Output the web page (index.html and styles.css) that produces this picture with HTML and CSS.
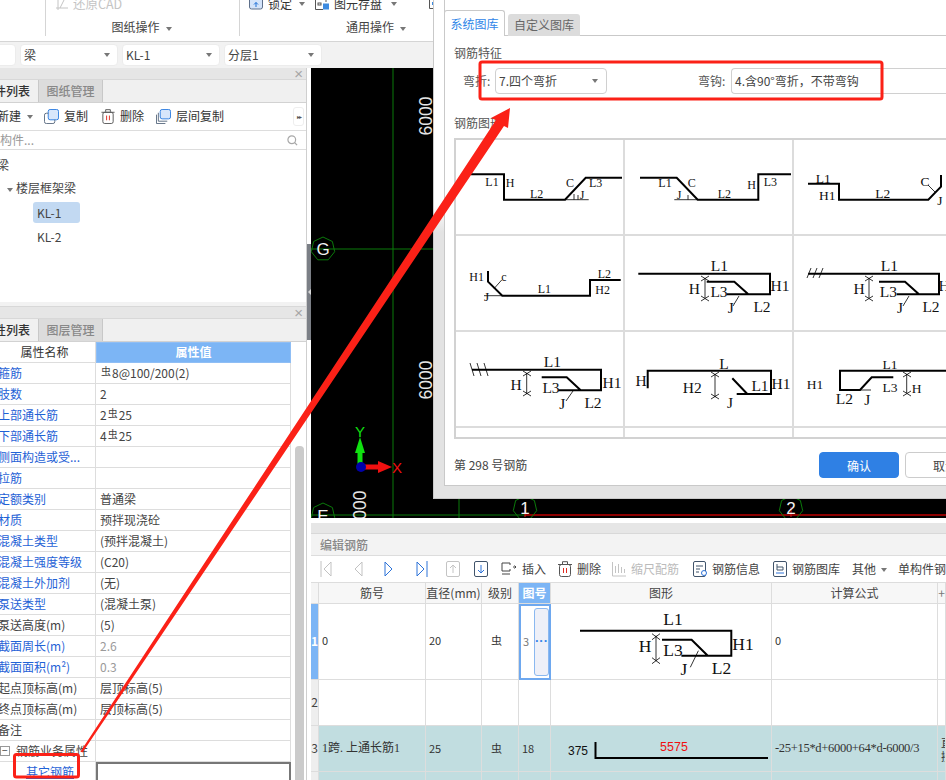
FILE: index.html
```html
<!DOCTYPE html>
<html lang="zh">
<head>
<meta charset="utf-8">
<title>编辑钢筋</title>
<link rel="stylesheet" href="styles.css">
</head>
<body>
<div class="app">
  <header class="ribbon">
    <div class="rgroup g0"></div>
    <div class="rgroup g1">
      <div class="rtool dim"><svg class="ri" viewBox="0 0 14 10"><path d="M1 8H13M3 0V10M9 0L5 8" fill="none" stroke="#c4c4c4"/></svg><span>还原CAD</span></div>
      <div class="rlabel">图纸操作<i class="caret"></i></div>
    </div>
    <div class="rgroup g2">
      <div class="rtool">
        <svg class="ri" viewBox="0 0 14 10"><rect x="0.5" y="-4" width="13" height="13" rx="2" fill="#d4e4fa" stroke="#5d6f8a"/><path d="M7 2.5V7M5 4.5L7 2.5L9 4.5" fill="none" stroke="#1d6fd6"/></svg>
        <span class="w-lock">锁定</span><i class="caret"></i>
        <svg class="ri ri2" viewBox="0 0 14 10"><path d="M.5 0V9.5H8M11 0V2" fill="none" stroke="#555"/><rect x="3" y="3" width="3" height="2" fill="none" stroke="#555"/><rect x="8" y="3.5" width="6" height="6" fill="#3d8be0"/></svg>
        <span class="w-save">图元存盘</span><i class="caret"></i>
        <svg class="ri ri3" viewBox="0 0 14 10"><path d="M.5 0V8.500H10V0" fill="none" stroke="#555"/><rect x="3" y="2" width="4" height="3" fill="#3d8be0"/></svg>
      </div>
      <div class="rlabel">通用操作<i class="caret"></i></div>
    </div>
  </header>

  <nav class="combos">
    <div class="combo c0"><i class="caret"></i></div>
    <div class="combo"><span>梁</span><i class="caret"></i></div>
    <div class="combo"><span>KL-1</span><i class="caret"></i></div>
    <div class="combo"><span>分层1</span><i class="caret"></i></div>
  </nav>

  <div class="work">
    <aside class="side">
      <section class="panel list">
        <div class="ptitle"><span class="close">×</span></div>
        <div class="tabs">
          <div class="tab on">构件列表</div>
          <div class="tab">图纸管理</div>
        </div>
        <div class="stool">
          <span class="clipl new">新建</span><i class="caret c-new"></i>
          <svg class="si s-copy" viewBox="0 0 16 16"><rect x="4.5" y="0.5" width="11" height="11" rx="2" fill="#d7e6fb" stroke="#2d7de0"/><path d="M4.5 4.5H2.5a2 2 0 0 0-2 2v7a2 2 0 0 0 2 2h7a2 2 0 0 0 2-2v-2" fill="none" stroke="#5a6b80"/></svg>
          <span>复制</span>
          <svg class="si s-del" viewBox="0 0 14 16"><path d="M0 3.5H14M4.5 3V.7H9.5V3" fill="none" stroke="#555"/><rect x="1.5" y="3.5" width="11" height="12" rx="2" fill="none" stroke="#555"/><path d="M5.5 7V12M8.5 7V12" stroke="#e02b20"/></svg>
          <span>删除</span>
          <svg class="si s-lay" viewBox="0 0 16 16"><rect x="4.5" y="0.5" width="11" height="10" rx="2" fill="#d7e6fb" stroke="#2d7de0"/><path d="M2.5 4V13H12M.5 6V15.5H10" fill="none" stroke="#5a6b80"/></svg>
          <span>层间复制</span>
          <span class="more">▸▸</span>
        </div>
        <div class="search"><span class="clipl ph">搜索构件...</span><svg class="sic" viewBox="0 0 12 12"><circle cx="5.2" cy="5.2" r="4.2" fill="none" stroke="#a8a8a8" stroke-width="1.3"/><path d="M8.2 8.2L11 11" stroke="#a8a8a8" stroke-width="1.3"/></svg></div>
        <div class="tree">
          <div class="n0"><span class="clipl l0">梁</span></div>
          <div class="n1"><i class="caret c-tree"></i>楼层框架梁</div>
          <div class="n2 sel">KL-1</div>
          <div class="n2">KL-2</div>
        </div>
      </section>

      <section class="panel props">
        <div class="ptitle"><span class="close">×</span></div>
        <div class="tabs">
          <div class="tab on">属性列表</div>
          <div class="tab">图层管理</div>
        </div>
        <div class="pbody">
          <div class="ptable">
            <div class="ph-n">属性名称</div><div class="ph-v">属性值</div>
            <div class="pn lk">箍筋</div><div class="pv"><span class="gr">虫</span>8@100/200(2)</div>
            <div class="pn lk">肢数</div><div class="pv">2</div>
            <div class="pn lk">上部通长筋</div><div class="pv">2<span class="gr">虫</span>25</div>
            <div class="pn lk">下部通长筋</div><div class="pv">4<span class="gr">虫</span>25</div>
            <div class="pn lk">侧面构造或受...</div><div class="pv"></div>
            <div class="pn lk">拉筋</div><div class="pv"></div>
            <div class="pn lk">定额类别</div><div class="pv">普通梁</div>
            <div class="pn lk">材质</div><div class="pv">预拌现浇砼</div>
            <div class="pn lk">混凝土类型</div><div class="pv">(预拌混凝土)</div>
            <div class="pn lk">混凝土强度等级</div><div class="pv">(C20)</div>
            <div class="pn lk">混凝土外加剂</div><div class="pv">(无)</div>
            <div class="pn lk">泵送类型</div><div class="pv">(混凝土泵)</div>
            <div class="pn">泵送高度(m)</div><div class="pv">(5)</div>
            <div class="pn lk">截面周长(m)</div><div class="pv mut">2.6</div>
            <div class="pn lk">截面面积(m²)</div><div class="pv mut">0.3</div>
            <div class="pn">起点顶标高(m)</div><div class="pv">层顶标高(5)</div>
            <div class="pn">终点顶标高(m)</div><div class="pv">层顶标高(5)</div>
            <div class="pn">备注</div><div class="pv"></div>
            <div class="pn grp"><span class="minus">−</span>钢筋业务属性</div><div class="pv"></div>
            <div class="pn sub"><span class="lk und">其它钢筋</span></div><div class="pv edit"></div>
          </div>
          <div class="track"><div class="thumb"></div></div>
        </div>
      </section>
    </aside>

    <div class="split"><div class="handle"><i class="nub"></i></div></div>

    <main class="right">
      <div class="canvas">
        <svg class="cad" viewBox="311 68 635 450">
          <defs><polygon id="hept" points="0,-12 9.4,-7.5 11.7,2.7 5.2,10.8 -5.2,10.8 -11.7,2.7 -9.4,-7.5" fill="none" stroke="#0b7a0b"/></defs>
          <path d="M393 68V518M311 249H946M459 499V518M311 515H525" stroke="#0b7a0b" fill="none"/>
          <path d="M525 515H946" stroke="#8c0000" stroke-width="2"/>
          <path d="M525 507V517M791 507V517" stroke="#d81818"/>
          <use href="#hept" x="323" y="249"/><use href="#hept" x="323" y="515"/><use href="#hept" x="525" y="508"/><use href="#hept" x="791" y="508"/>
          <text class="bub" x="323" y="255">G</text><text class="bub" x="323" y="522">E</text><text class="bub" x="525" y="514">1</text><text class="bub" x="791" y="514">2</text>
          <text class="dim6" transform="translate(432 116) rotate(-90)">6000</text>
          <text class="dim6" transform="translate(432 380) rotate(-90)">6000</text>
          <text class="dim6" transform="translate(366 510) rotate(-90)">6000</text>
          <path d="M360 468V448" stroke="#10e010" stroke-width="5"/><path d="M360 437L365 453H355Z" fill="#10e010"/>
          <path d="M360 467H382" stroke="#f01010" stroke-width="5"/><path d="M392 467L378 461V473Z" fill="#f01010"/>
          <circle cx="361" cy="467" r="5" fill="#0000a8"/>
          <text class="ax g" x="360" y="437">Y</text><text class="ax r" x="397" y="473">X</text>
        </svg>
      </div>
      <div class="gap"></div>
      <section class="edit-panel">
        <div class="ptitle wide"></div>
        <div class="ehead">编辑钢筋</div>
        <div class="etool">
          <svg class="nv" viewBox="0 0 12 18"><path d="M1 1V17M11 2L4 9L11 16Z" fill="none" stroke="#c2c2c2"/></svg>
          <svg class="nv m1" viewBox="0 0 12 18"><path d="M10 2L3 9L10 16Z" fill="none" stroke="#c2c2c2"/></svg>
          <svg class="nv m2" viewBox="0 0 12 18"><path d="M2 2L9 9L2 16Z" fill="none" stroke="#2c72d8"/></svg>
          <svg class="nv m3" viewBox="0 0 12 18"><path d="M11 1V17M1 2L8 9L1 16Z" fill="none" stroke="#2c72d8"/></svg>
          <svg class="bx m4" viewBox="0 0 14 16"><rect x=".5" y=".5" width="13" height="15" rx="1.5" fill="none" stroke="#c4c4c4"/><path d="M7 12V4M4 7L7 4L10 7" fill="none" stroke="#c4c4c4"/></svg>
          <svg class="bx m5" viewBox="0 0 14 16"><rect x=".5" y=".5" width="13" height="15" rx="1.5" fill="none" stroke="#41546b"/><path d="M7 4V12M4 9L7 12L10 9" fill="none" stroke="#2c72d8"/></svg>
          <svg class="ti m6" viewBox="0 0 16 14"><path d="M9 3V1H1V9H9V7M12 5H15M13.500 3.500L15 5L13.500 6.500" fill="none" stroke="#444"/><path d="M1 12H9" stroke="#444"/></svg>
          <span class="lbl">插入</span>
          <svg class="ti m7" viewBox="0 0 14 16"><path d="M0 3.5H14M4.500 3V.7H9.500V3" fill="none" stroke="#555"/><rect x="1.500" y="3.500" width="11" height="12" rx="2" fill="none" stroke="#555"/><path d="M5.500 7V12M8.500 7V12" stroke="#e02b20"/></svg>
          <span class="lbl">删除</span>
          <svg class="ti m8" viewBox="0 0 14 16"><path d="M.5 1V15H14M3.500 5V12M6.500 3V12M9.500 6V12M12.500 8V12" fill="none" stroke="#c4c4c4"/></svg>
          <span class="lbl off">缩尺配筋</span>
          <svg class="ti m9" viewBox="0 0 14 16"><rect x=".5" y=".5" width="12" height="15" rx="1.500" fill="none" stroke="#41546b"/><path d="M3 5H10M3 8H7M3 11H6" stroke="#41546b"/><circle cx="11" cy="12" r="2.500" fill="#fff" stroke="#2c72d8"/></svg>
          <span class="lbl">钢筋信息</span>
          <svg class="ti m10" viewBox="0 0 14 16"><rect x=".5" y=".5" width="13" height="15" rx="1.500" fill="none" stroke="#41546b"/><path d="M4 3V9H10V6H4" fill="none" stroke="#41546b"/><path d="M3 12H11" stroke="#2c72d8"/></svg>
          <span class="lbl">钢筋图库</span>
          <span class="lbl m11">其他</span><i class="caret m12"></i>
          <span class="lbl m13">单构件钢筋</span>
        </div>
        <div class="etable">
          <div class="rn hd"></div><div class="th">筋号</div><div class="th">直径(mm)</div><div class="th">级别</div><div class="th act">图号</div><div class="th">图形</div><div class="th">计算公式</div><div class="th clip">+</div>

          <div class="rn cur r1">1</div><div class="td r1">0</div><div class="td r1">20</div><div class="td r1 ctr"><span class="gr2">虫</span></div>
          <div class="td r1 focus"><span class="fv">3</span><span class="dots">···</span></div>
          <div class="td r1 draw">
            <svg class="shape" viewBox="552 605 220 75">
              <path class="hv" d="M581 631.700H732.300V656.700H682.400M663 640.700H692.600L708.800 656.700"/>
              <path class="th1" d="M657 636.700V661.700M653 640.700L661 634.700M653 634.700L661 640.700M653 664.700L661 658.700M653 658.700L661 664.700M699.400 651.700L691.300 668.300"/>
              <text class="big" x="674" y="626">L1</text><text class="big" x="744" y="650.500">H1</text><text class="big" x="646" y="653">H</text><text class="big" x="674" y="656.500">L3</text><text class="big" x="685" y="676">J</text><text class="big" x="722.600" y="674.500">L2</text>
            </svg>
          </div>
          <div class="td r1">0</div><div class="td r1"></div>

          <div class="rn r2">2</div><div class="td r2"></div><div class="td r2"></div><div class="td r2"></div><div class="td r2"></div><div class="td r2"></div><div class="td r2"></div><div class="td r2"></div>

          <div class="rn r3 num3">3</div><div class="td r3 tl sim">1跨. 上通长筋1</div><div class="td r3 tl">25</div><div class="td r3 tl ctr"><span class="gr2">虫</span></div><div class="td r3 tl">18</div>
          <div class="td r3 tl draw">
            <svg class="shape" viewBox="552 727 220 45">
              <path class="hv" d="M596.500 743V759H769"/>
              <text class="cad-n" x="579" y="756">375</text><text class="cad-r" x="675" y="752">5575</text>
            </svg>
          </div>
          <div class="td r3 tl sim fm">-25+15*d+6000+64*d-6000/3</div><div class="td r3 tl clip v2">直<br>接</div>

          <div class="rn r4"></div><div class="td r4 tl"></div><div class="td r4 tl"></div><div class="td r4 tl"></div><div class="td r4 tl"></div><div class="td r4 tl"></div><div class="td r4 tl"></div><div class="td r4 tl"></div>
        </div>
      </section>
    </main>
  </div>

  <section class="dialog">
    <div class="dinner">
      <div class="dtabs">
        <div class="dtab on">系统图库</div>
        <div class="dtab">自定义图库</div>
      </div>
      <div class="dbody">
        <div class="cap">钢筋特征</div>
        <div class="feat">
          <span class="flabel">弯折:</span>
          <div class="fsel">7.四个弯折<i class="caret"></i></div>
          <span class="flabel f2">弯钩:</span>
          <div class="finp">4.含90°弯折，不带弯钩</div>
        </div>
        <div class="cap c2">钢筋图形</div>
        <div class="gallery">
          <div class="cell"><svg viewBox="456 140 167 94">
            <path class="hv" d="M470.700 174.300H504V199.700H565L585.700 177.700H622"/><path class="th1" d="M565 199.700H588.700M574 199.700V194M578 199.700V195"/>
            <text class="sm" x="492" y="186">L1</text><text class="sm" x="510" y="187">H</text><text class="sm" x="536.700" y="198">L2</text><text class="sm" x="570" y="187">C</text><text class="sm" x="595.700" y="187">L3</text><text class="sm" x="582" y="199">J</text>
          </svg></div>
          <div class="cell"><svg viewBox="625 140 167 94">
            <path class="hv" d="M640 177.700H676.700L697.700 199.700H758.300V174.300H791"/><path class="th1" d="M674.300 199.700H697M688 199.700V195"/>
            <text class="sm" x="665" y="187">L1</text><text class="sm" x="691.700" y="187">C</text><text class="sm" x="679" y="199">J</text><text class="sm" x="724.300" y="198">L2</text><text class="sm" x="751.700" y="189">H</text><text class="sm" x="770.300" y="186">L3</text>
          </svg></div>
          <div class="cell"><svg viewBox="794 140 167 94">
            <path class="hv" d="M808 183.700H839V199.700H928.300L941 186.700V175"/><path class="th1" d="M928 185L936 193"/>
            <text class="sm2" x="823.300" y="183">L1</text><text class="sm2" x="827.300" y="199.500">H1</text><text class="sm2" x="882.700" y="197.500">L2</text><text class="sm2" x="925" y="186">C</text><text class="sm2" x="940" y="205">J</text>
          </svg></div>

          <div class="cell"><svg viewBox="456 236 167 94">
            <path class="hv" d="M488 271V281.700L502.300 295.700H590V280H620.700"/><path class="th1" d="M494.300 288.300L501.700 280M484 295.700H502"/>
            <text class="sm" x="476.700" y="281">H1</text><text class="sm" x="504" y="281">c</text><text class="sm2" x="486.700" y="301">J</text><text class="sm" x="544.300" y="293">L1</text><text class="sm" x="604.300" y="277.500">L2</text><text class="sm" x="602.700" y="293.500">H2</text>
          </svg></div>
          <div class="cell"><svg viewBox="625 236 167 94">
            <path class="hv" d="M638.300 273.700H770V294.300H726.700M706.700 281.700H734.300L748.300 294.300"/>
            <path class="th1" d="M705 278V298M701 281L709 276M701 276L709 281M701 301L709 296M701 296L709 301M739 296L733 306"/>
            <text class="md" x="719.300" y="271">L1</text><text class="md" x="780" y="291">H1</text><text class="md" x="694.300" y="294">H</text><text class="md" x="719" y="297">L3</text><text class="md" x="730.700" y="313">J</text><text class="md" x="762" y="312">L2</text>
          </svg></div>
          <div class="cell"><svg viewBox="794 236 167 94">
            <path class="hv" d="M808.300 273.700H939V294.300H896.700M879 281.700H905L919 294.300"/>
            <path class="th1" d="M808.300 273.700H810M807 278L811 268M813 278L817 268M819 278L823 268M869 278V298M865 281L873 276M865 276L873 281M865 301L873 296M865 296L873 301M909 296L903 306"/>
            <text class="md" x="889.300" y="271">L1</text><text class="md" x="948" y="291">H1</text><text class="md" x="859" y="294">H</text><text class="md" x="888.300" y="297">L3</text><text class="md" x="900" y="313">J</text><text class="md" x="931" y="312">L2</text>
          </svg></div>

          <div class="cell"><svg viewBox="456 332 167 94">
            <path class="hv" d="M472 369.700H601V390.300H558.300M541.700 377.300H566.700L580.700 390.300"/>
            <path class="th1" d="M470 363L474 376M477 363L481 376M484 363L488 376M526.700 373V394M523 376L531 371M523 371L531 376M523 396L531 391M523 391L531 396M573 391L566 401"/>
            <text class="md" x="552.300" y="367">L1</text><text class="md" x="612" y="388">H1</text><text class="md" x="516" y="390">H</text><text class="md" x="551" y="393">L3</text><text class="md" x="562.300" y="409">J</text><text class="md" x="593" y="408">L2</text>
          </svg></div>
          <div class="cell"><svg viewBox="625 332 167 94">
            <path class="hv" d="M647.700 388.300V370.700H771V394H736.700M732.300 378.300L747.300 394"/>
            <path class="th1" d="M715 374V397M711 377L719 372M711 372L719 377M711 399L719 394M711 394L719 399"/>
            <text class="md" x="724" y="369">L</text><text class="md" x="641" y="386">H</text><text class="md" x="692.300" y="393">H2</text><text class="md" x="760" y="391">L1</text><text class="md" x="781" y="389">H1</text><text class="md" x="730" y="408">J</text>
          </svg></div>
          <div class="cell"><svg viewBox="794 332 167 94">
            <path class="hv" d="M893.300 377.300H871.700L860 390H840V370.700H946"/>
            <path class="th1" d="M906.700 374V393M903 377L911 372M903 372L911 377M903 396L911 391M903 391L911 396M854 390H871"/>
            <text class="sm2" x="890" y="369">L1</text><text class="sm2" x="815" y="389">H1</text><text class="md" x="844.300" y="404">L2</text><text class="md" x="867.300" y="405">J</text><text class="sm2" x="890" y="392">L3</text><text class="sm2" x="916.700" y="393">H</text>
          </svg></div>

          <div class="cell low"></div><div class="cell low"></div><div class="cell low"></div>
        </div>
        <div class="dfoot">
          <span class="count">第 298 号钢筋</span>
          <button class="ok">确认</button>
          <button class="cancel">取消</button>
        </div>
      </div>
    </div>
  </section>

  <svg class="notes" viewBox="0 0 946 780">
    <rect x="480" y="62" width="402" height="37" rx="2" fill="none" stroke="#fb2117" stroke-width="3"/>
    <rect x="14.500" y="754.500" width="64" height="22.500" rx="2" fill="none" stroke="#fb2117" stroke-width="3"/>
    <polygon points="510,108 508,128 504,126 82.500,752.600 80.500,751.400 496,120 491,118" fill="#fb2117"/>
  </svg>
</div>
</body>
</html>
```
FILE: styles.css
```css
* { box-sizing: border-box; }
html, body { margin: 0; padding: 0; }
body { background: #fff; color: #333; font: 12px/1.2 "Noto Sans CJK SC", "Noto Sans", sans-serif; }
.app { position: relative; width: 946px; height: 780px; overflow: hidden; background: #f2f2f2; }
i.caret { display: inline-block; width: 0; height: 0; border: 3.5px solid transparent; border-top: 4px solid #777; border-bottom: 0; }

/* ribbon */
.ribbon { display: flex; height: 42px; background: #fff; border-bottom: 1px solid #d5d5d5; }
.rgroup { position: relative; height: 36px; border-right: 1px solid #d5d5d5; overflow: hidden; }
.g0 { width: 46px; }
.g1 { width: 194px; }
.g2 { width: 200px; border-right: 0; }
.rtool { display: flex; align-items: flex-start; height: 11px; margin-top: -4px; padding-left: 9px; white-space: nowrap; }
.rtool > * { flex: none; }
.rtool.dim { color: #c4c4c4; font-size: 13px; }
.rtool span { margin-left: 5px; line-height: 15px; font-size: 12px; }
.rtool.dim span { font-size: 12.500px; margin-left: 4px; }
.rtool .caret { margin: 6px 0 0 7px; }
.w-lock { width: 24px; }
.w-save { width: 50px; }
.ri { width: 14px; height: 10px; margin-top: 4px; flex: none; }
.ri2 { margin-left: 10px; }
.ri3 { margin-left: 32px; }
.rlabel { margin-top: 11px; text-align: center; line-height: 18px; color: #444; white-space: nowrap; }
.g1 .rlabel { margin-left: -2px; }
.g2 .rlabel { margin-left: 72px; }
.rlabel .caret { margin-left: 6px; vertical-align: middle; }

.combos { display: flex; gap: 4px; height: 26px; padding-top: 2px; margin-left: -82px; }
.combo { display: flex; align-items: center; justify-content: space-between; width: 98px; height: 22px; padding: 0 7px 0 3px; background: #fff; border: 1px solid #ececec; border-radius: 4px; color: #444; }

/* work */
.work { display: flex; height: 712px; }
.side { display: flex; flex-direction: column; width: 307px; flex: none; border-right: 1px solid #cfcfcf; }
.split { position: relative; width: 4px; background: #fff; }
.handle { position: absolute; left: 0; top: 176px; display: flex; align-items: center; justify-content: center; width: 4px; height: 96px; background: #7b7f86; }
.nub { width: 0; height: 0; border: 3px solid transparent; border-right: 3px solid #d8d8d8; border-left: 0; }
.right { display: flex; flex-direction: column; flex: 1; min-width: 0; }

.panel { background: #fff; }
.list { height: 234px; }
.props { margin-top: 4px; flex: 1; min-height: 0; border-top: 1px solid #d8d8d8; }
.ptitle { display: flex; justify-content: flex-end; height: 12px; background: #e6e6e6; border-bottom: 1px solid #d8d8d8; }
.close { margin-right: 3px; color: #a5a5a5; font: 15px/11px "Liberation Sans", sans-serif; }
.tabs { display: flex; height: 23px; background: #f0f0f0; border-bottom: 1px solid #d2d2d2; }
.tab { display: flex; align-items: center; justify-content: center; width: 65px; height: 22px; background: #dcdcdc; border: 1px solid #c8c8c8; border-width: 0 1px; color: #888; font-weight: 500; }
.tab.on { justify-content: flex-end; width: 38px; padding-right: 8px; background: #f0f0f0; border: 0; color: #333; white-space: nowrap; overflow: hidden; }

.stool { position: relative; display: flex; align-items: center; height: 28px; border-bottom: 1px solid #ddd; white-space: nowrap; }
.clipl { margin-left: -3px; }
.new { width: 24px; flex: none; }
.c-new { margin: 1px 0 0 6px; border-top-color: #aaa; }
.si { flex: none; width: 15px; height: 15px; margin-right: 5px; }
.s-copy { margin-left: 11px; }
.s-del { margin-left: 13px; width: 14px; }
.s-lay { margin-left: 12px; }
.more { position: absolute; right: 2px; top: 4px; width: 11px; height: 19px; background: #fff; border: 1px solid #eee; border-radius: 3px; color: #555; font-size: 6px; line-height: 17px; text-align: center; letter-spacing: -1px; }
.search { display: flex; align-items: center; justify-content: space-between; height: 19px; padding-right: 8px; border-bottom: 1px solid #ddd; color: #999; overflow: hidden; white-space: nowrap; }
.ph { margin-left: -24px; }
.sic { width: 11px; height: 11px; }
.tree { color: #444; }
.tree > div { height: 24px; line-height: 24px; }
.n0 { margin-top: 3px; }
.n1 { padding-left: 7px; }
.c-tree { margin-right: 3px; vertical-align: middle; border-top-color: #888; }
.tree .n2 { width: 47px; height: 21px; margin: 0 0 3px 33px; padding-left: 4px; line-height: 21px; border-radius: 3px; }
.tree .n1 { margin-top: -1px; height: 23px; margin-bottom: 3px; }
.sel { background: #c2d9f2; }
.tree .n2 + .n2 { margin-top: 1px; }

.pbody { display: flex; height: 440px; overflow: hidden; }
.ptable { display: grid; grid-template-columns: 96px 195px; grid-auto-rows: 21px; flex: none; width: 291px; }
.ptable > div { display: flex; align-items: center; border-bottom: 1px solid #ddd; white-space: nowrap; overflow: hidden; }
.ph-n { justify-content: center; padding-right: 6px; font-size: 12px; border-right: 1px solid #ddd; }
.ph-v { justify-content: center; background: #7cb5f5; color: #fff; font-weight: 700; border: 1px solid #8fbef5 !important; }
.pn { padding-left: 0; margin-left: 0; text-indent: -2px; border-right: 1px solid #ddd; color: #444; }
.pn.lk, .lk { color: #1f62d6; }
.pv { padding-left: 4px; color: #444; border-right: 1px solid #ddd; }
.mut { color: #9a9a9a; }
.gr { position: relative; top: -2px; margin: 0 1px; font-size: 10px; }
.minus { display: inline-block; width: 10px; height: 10px; margin-right: 6px; border: 1px solid #999; font: 10px/8px "Liberation Sans", sans-serif; text-indent: 0; text-align: center; }
.pn.grp { text-indent: 0; }
.pn.sub { padding-left: 26px; text-indent: 0; }
.und { text-decoration: underline; }
.pv.edit { border: 2px solid #777 !important; }
.track { position: relative; flex: 1; background: #fff; }
.thumb { position: absolute; left: 4px; top: 104px; width: 9px; height: 340px; background: #cbcbcb; border-radius: 4px 4px 0 0; }

/* canvas */
.canvas { height: 450px; background: #000; }
.cad { display: block; width: 635px; height: 450px; }
.bub { fill: #f2f2f2; font: 17px "Liberation Sans", sans-serif; text-anchor: middle; }
.dim6 { fill: #e6e6e6; font: 17.500px "Liberation Sans", sans-serif; text-anchor: middle; }
.ax { font: 15px "Liberation Sans", sans-serif; text-anchor: middle; }
.ax.g { fill: #10e010; }
.ax.r { fill: #f01010; }
.gap { height: 5px; background: #fff; }

/* bottom panel */
.edit-panel { flex: 1; min-height: 0; background: #fff; }
.ptitle.wide { height: 11px; }
.ehead { height: 22px; padding-left: 9px; line-height: 22px; background: #f3f3f3; border-bottom: 1px solid #ddd; color: #888; font-weight: 500; }
.etool { display: flex; align-items: center; height: 27px; white-space: nowrap; overflow: hidden; border-bottom: 1px solid #ddd; }
.nv { flex: none; width: 12px; height: 18px; margin-left: 9px; }
.m1 { margin-left: 20px; }
.m2 { margin-left: 19px; }
.m3 { margin-left: 21px; }
.bx { flex: none; width: 14px; height: 16px; }
.m4 { margin-left: 18px; }
.m5 { margin-left: 14px; }
.ti { flex: none; width: 14px; height: 16px; }
.m6 { width: 16px; height: 14px; margin-left: 13px; }
.m7 { margin-left: 12px; }
.m8 { margin-left: 11px; }
.m9 { margin-left: 14px; }
.m10 { margin-left: 13px; }
.lbl { margin-left: 5px; color: #444; }
.lbl.off { color: #bbb; }
.m11 { margin-left: 12px; }
.m12 { margin: 2px 0 0 5px; border-top-color: #aaa; flex: none; }
.m13 { margin-left: 11px; }

.etable { display: grid; grid-template-columns: 8px 107px 56px 37px 32px 221px 166px 8px; grid-template-rows: 21px 76px 46px 46px 20px; overflow: hidden; height: 197px; }
.etable > div { border-right: 1px solid #ddd; border-bottom: 1px solid #ddd; white-space: nowrap; overflow: hidden; }
.rn { display: flex; align-items: center; justify-content: center; background: #eee; font-size: 12px; color: #444; }
.rn.hd { background: #f5f5f5; }
.rn.cur { background: #7cb5f5; color: #fff; font-weight: 700; }
.th { line-height: 20px; text-align: center; background: #f7f7f7; color: #444; }
.th.act { background: #7cb5f5; color: #fff; font-weight: 700; }
.th.clip { color: #777; }
.td { display: flex; align-items: center; padding-left: 3px; color: #333; font-size: 11px; }
.ctr { padding: 0 7px 0 0; justify-content: center; }
.gr2 { font-size: 11px; }
.r1 { padding-bottom: 1px; }
.focus { position: relative; padding: 0; border: 2px solid #6ea8ef !important; }
.fv { padding-left: 2px; color: #7a7a7a; }
.dots { position: absolute; right: 0; top: 2px; width: 15px; height: 68px; background: #eef0f8; border: 1px solid #8ab8f0; border-radius: 3px; color: #3a86e8; font: 700 13px/64px "Liberation Sans", sans-serif; text-align: center; }
.draw { padding: 0; }
.shape { display: block; width: 220px; flex: none; height: 100%; }
.r1 .shape { height: 75px; }
.r3 .shape { height: 45px; }
.tl { background: #c1dde0; }
.rn.num3 { background: #eee; }
.sim { font-family: "Liberation Serif", "Noto Sans CJK SC", serif; font-size: 12px; }
.fm { font-size: 12.500px; letter-spacing: -.3px; }
.v2 { line-height: 14px; font-size: 11px; padding-left: 3px; }
.rn.r4 { background: #eee; }

/* dialog */
.dialog { position: absolute; left: 433px; top: 0; width: 513px; height: 499px; padding: 0 0 12px 10px; background: linear-gradient(#fff 0, #fff 205px, #e3e3e3 232px); border-left: 1px solid #c9c9c9; border-bottom: 1px solid #c9c9c9; }
.dinner { height: 100%; background: #fff; border-left: 1px solid #c9c9c9; border-bottom: 1px solid #c9c9c9; }
.dtabs { display: flex; align-items: flex-end; gap: 3px; height: 36px; border-bottom: 1px solid #c9c9c9; }
.dtab { width: 72px; height: 22px; margin-bottom: -1px; background: #dcdcdc; border-radius: 3px 3px 0 0; color: #666; line-height: 22px; text-align: center; }
.dtab.on { position: relative; width: 61px; height: 26px; margin-left: -1px; background: #fff; border: 1px solid #c9c9c9; border-bottom: 0; color: #2f86e8; line-height: 26px; }
.dbody { padding: 9px 0 0 9px; }
.cap { height: 16px; line-height: 16px; color: #555; }
.cap.c2 { margin-top: 21px; }
.feat { display: flex; align-items: center; margin-top: 7px; height: 26px; }
.flabel { margin-left: 9px; width: 32px; color: #555; }
.flabel.f2 { margin-left: 91px; width: 33px; }
.fsel { display: flex; align-items: center; justify-content: space-between; width: 112px; height: 26px; padding: 0 8px 0 3px; border: 1px solid #d0d0d0; border-radius: 4px; color: #444; }
.finp { flex: 1; height: 26px; padding-left: 3px; line-height: 24px; border: 1px solid #d0d0d0; border-right: 0; border-radius: 4px 0 0 4px; color: #444; white-space: nowrap; }
.gallery { display: grid; grid-template-columns: repeat(3, 169px); grid-template-rows: 96px 96px 96px 12px; width: 507px; height: 301px; margin-top: 7px; border: 1px solid #d2d2d2; border-width: 2px 0 2px 2px; overflow: hidden; }
.cell { border-right: 2px solid #dcdcdc; border-bottom: 2px solid #dcdcdc; overflow: hidden; }
.cell.low { border-bottom: 0; }
.cell svg { display: block; width: 167px; height: 94px; }
.hv { fill: none; stroke: #000; stroke-width: 2; }
.th1 { fill: none; stroke: #000; stroke-width: .8; }
.sm, .sm2, .md, .big, .cad-n, .cad-r { fill: #111; font-family: "Liberation Serif", serif; text-anchor: middle; }
.sm { font-size: 12px; }
.sm2 { font-size: 13.500px; }
.md { font-size: 15.500px; }
.big { font-size: 17.500px; }
.cad-n { font-size: 12px; font-family: "Liberation Sans", sans-serif; }
.cad-r { fill: #f01010; font-size: 12.500px; font-family: "Liberation Sans", sans-serif; }
.dfoot { display: flex; align-items: center; height: 26px; margin-top: 13px; overflow: hidden; }
.dfoot > * { flex: none; }
.count { width: 365px; color: #444; }
.ok, .cancel { width: 80px; height: 26px; padding: 0; border: 1px solid #2f80e4; border-radius: 4px; background: #2f80e4; color: #fff; font: 12px "Noto Sans CJK SC", sans-serif; }
.cancel { margin-left: 6px; background: #fff; border-color: #ccc; color: #444; }

.notes { position: absolute; left: 0; top: 0; width: 946px; height: 780px; pointer-events: none; }
```
